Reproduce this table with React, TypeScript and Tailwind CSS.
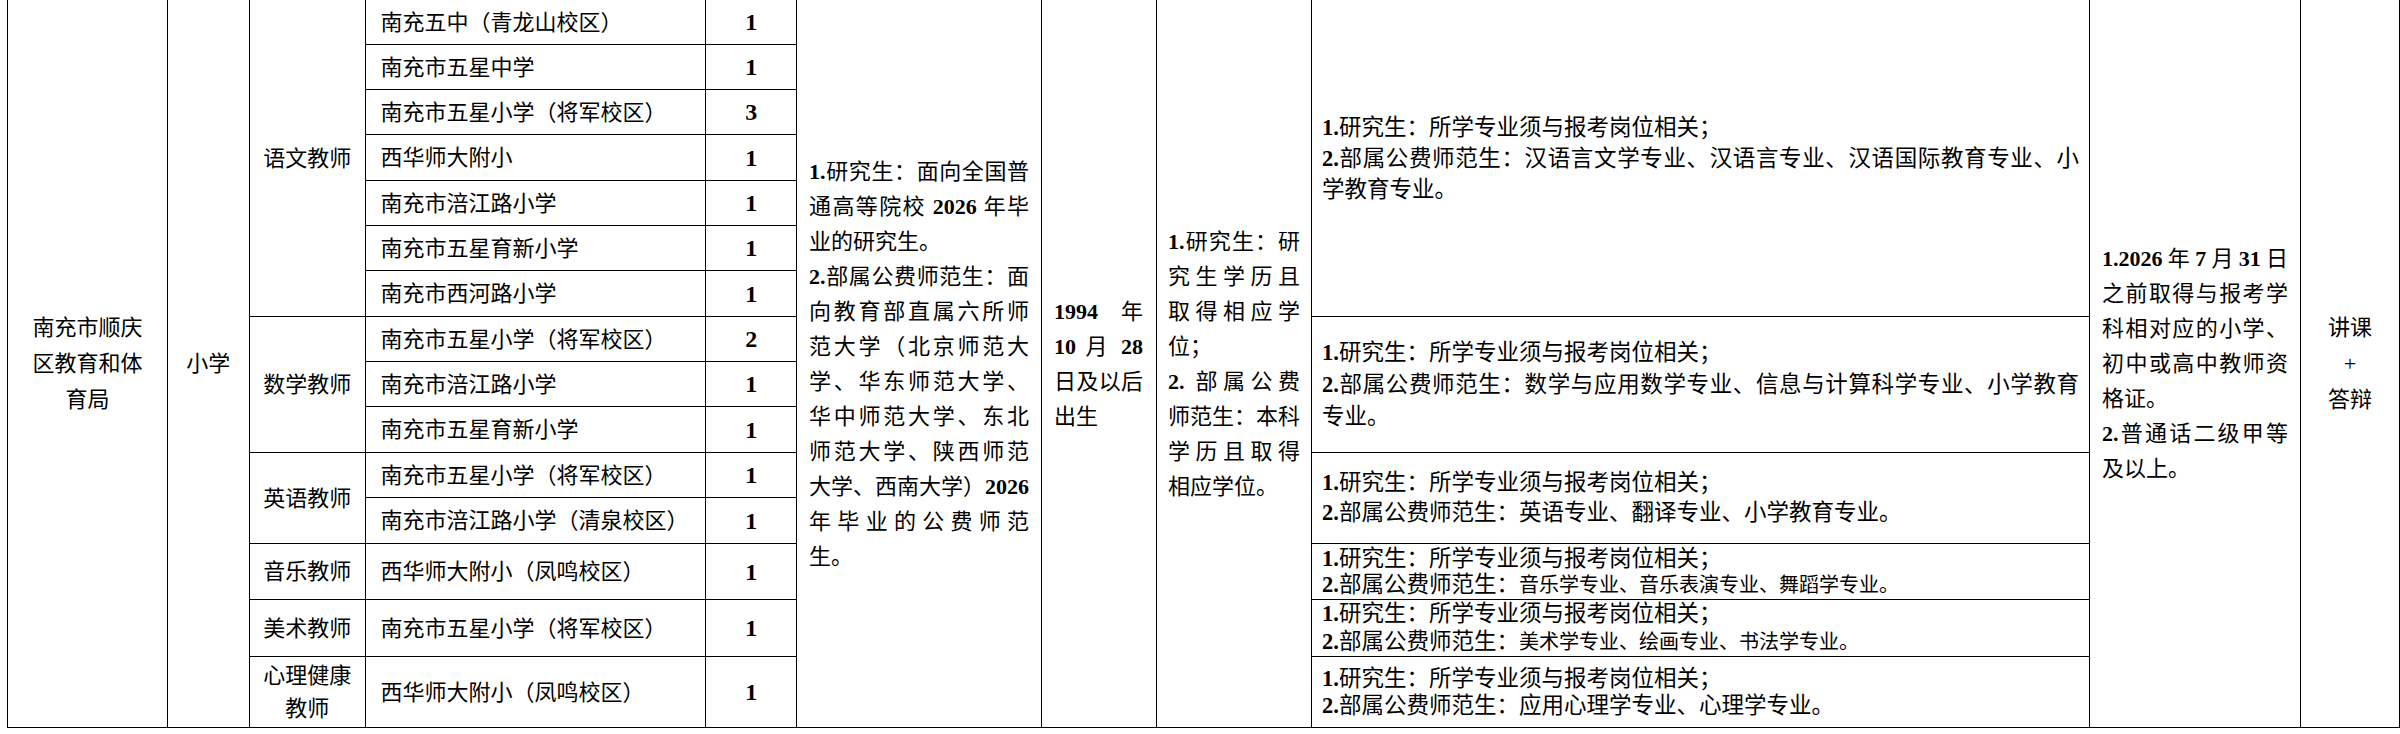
import React from "react";
import clsx from "clsx";

type School = { name: string; count: number; h: string };
type Group = { subject: React.ReactNode; schools: School[]; spec: React.ReactNode };

const cell = "border border-black p-0 align-middle";

// one printed line; justified lines are stretched to the cell width
function L({ j, className, children }: { j?: boolean; className?: string; children: React.ReactNode }) {
  return (
    <div className={clsx("whitespace-nowrap", j ? "text-justify [text-align-last:justify]" : "text-left", className)}>
      {children}
    </div>
  );
}

const B = ({ children }: { children: React.ReactNode }) => <b className="font-bold">{children}</b>;

const first = (
  <L>
    <B>1.</B>研究生：所学专业须与报考岗位相关；
  </L>
);

const groups: Group[] = [
  {
    subject: "语文教师",
    schools: [
      { name: "南充五中（青龙山校区）", count: 1, h: "h-[45px]" },
      { name: "南充市五星中学", count: 1, h: "h-[45px]" },
      { name: "南充市五星小学（将军校区）", count: 3, h: "h-[45px]" },
      { name: "西华师大附小", count: 1, h: "h-[46px]" },
      { name: "南充市涪江路小学", count: 1, h: "h-[45px]" },
      { name: "南充市五星育新小学", count: 1, h: "h-[45px]" },
      { name: "南充市西河路小学", count: 1, h: "h-[46px]" },
    ],
    spec: (
      <div className="leading-[31px]">
        {first}
        <L j>
          <B>2.</B>部属公费师范生：汉语言文学专业、汉语言专业、汉语国际教育专业、小
        </L>
        <L>学教育专业。</L>
      </div>
    ),
  },
  {
    subject: "数学教师",
    schools: [
      { name: "南充市五星小学（将军校区）", count: 2, h: "h-[45px]" },
      { name: "南充市涪江路小学", count: 1, h: "h-[45px]" },
      { name: "南充市五星育新小学", count: 1, h: "h-[46px]" },
    ],
    spec: (
      <div className="leading-[32px]">
        {first}
        <L j>
          <B>2.</B>部属公费师范生：数学与应用数学专业、信息与计算科学专业、小学教育
        </L>
        <L>专业。</L>
      </div>
    ),
  },
  {
    subject: "英语教师",
    schools: [
      { name: "南充市五星小学（将军校区）", count: 1, h: "h-[45px]" },
      { name: "南充市涪江路小学（清泉校区）", count: 1, h: "h-[46px]" },
    ],
    spec: (
      <div className="leading-[30px]">
        {first}
        <L>
          <B>2.</B>部属公费师范生：英语专业、翻译专业、小学教育专业。
        </L>
      </div>
    ),
  },
  {
    subject: "音乐教师",
    schools: [{ name: "西华师大附小（凤鸣校区）", count: 1, h: "h-[56px]" }],
    spec: (
      <div className="leading-[26px]">
        {first}
        <L>
          <B>2.</B>部属公费师范生：<span className="text-[20px]">音乐学专业、音乐表演专业、舞蹈学专业。</span>
        </L>
      </div>
    ),
  },
  {
    subject: "美术教师",
    schools: [{ name: "南充市五星小学（将军校区）", count: 1, h: "h-[55px]" }],
    spec: (
      <div className="leading-[28px]">
        {first}
        <L>
          <B>2.</B>部属公费师范生：<span className="text-[20px]">美术学专业、绘画专业、书法学专业。</span>
        </L>
      </div>
    ),
  },
  {
    subject: (
      <div className="leading-[33px]">
        心理健康
        <br />
        教师
      </div>
    ),
    schools: [{ name: "西华师大附小（凤鸣校区）", count: 1, h: "h-[71px]" }],
    spec: (
      <div className="leading-[27px]">
        {first}
        <L>
          <B>2.</B>部属公费师范生：应用心理学专业、心理学专业。
        </L>
      </div>
    ),
  },
];

const total = groups.reduce((n, g) => n + g.schools.length, 0);

export default function App() {
  let rowIndex = 0;

  return (
    <div className="h-[734px] w-[2400px] overflow-hidden bg-white text-[22px] text-black font-['Liberation_Serif','Noto_Sans_CJK_SC',serif]">
      <table className="ml-[7px] -mt-px table-fixed border-collapse">
        <colgroup>
          <col className="w-[160px]" />
          <col className="w-[82px]" />
          <col className="w-[116px]" />
          <col className="w-[341px]" />
          <col className="w-[91px]" />
          <col className="w-[243px]" />
          <col className="w-[115px]" />
          <col className="w-[155px]" />
          <col className="w-[778px]" />
          <col className="w-[211px]" />
          <col className="w-[99px]" />
        </colgroup>
        <tbody>
          {groups.map((g) =>
            g.schools.map((s, i) => {
              const top = rowIndex++ === 0;
              return (
                <tr key={`${s.name}-${rowIndex}`} className={s.h}>
                  {top && (
                    <>
                      <td rowSpan={total} className={clsx(cell, "text-center leading-[36px]")}>
                        南充市顺庆
                        <br />
                        区教育和体
                        <br />
                        育局
                      </td>
                      <td rowSpan={total} className={clsx(cell, "text-center")}>
                        小学
                      </td>
                    </>
                  )}
                  {i === 0 && (
                    <td rowSpan={g.schools.length} className={clsx(cell, "text-center")}>
                      {g.subject}
                    </td>
                  )}
                  <td className={clsx(cell, "pl-[15px]")}>{s.name}</td>
                  <td className={clsx(cell, "text-center text-[24px] font-bold")}>{s.count}</td>
                  {top && (
                    <>
                      <td rowSpan={total} className={clsx(cell, "px-[12px] leading-[35px]")}>
                        <L j>
                          <B>1.</B>研究生：面向全国普
                        </L>
                        <L j>
                          通高等院校 <B>2026</B> 年毕
                        </L>
                        <L>业的研究生。</L>
                        <L j>
                          <B>2.</B>部属公费师范生：面
                        </L>
                        <L j>向教育部直属六所师</L>
                        <L j>范大学（北京师范大</L>
                        <L j>学、华东师范大学、</L>
                        <L j>华中师范大学、东北</L>
                        <L j>师范大学、陕西师范</L>
                        <L j>
                          大学、西南大学）<B>2026</B>
                        </L>
                        <L j>年毕业的公费师范</L>
                        <L>生。</L>
                      </td>
                      <td rowSpan={total} className={clsx(cell, "pl-[12px] pr-[13px] leading-[35px]")}>
                        <L j>
                          <B>1994</B> 年
                        </L>
                        <L j>
                          <B>10</B> 月 <B>28</B>
                        </L>
                        <L j>日及以后</L>
                        <L>出生</L>
                      </td>
                      <td rowSpan={total} className={clsx(cell, "px-[11px] leading-[35px]")}>
                        <L j>
                          <B>1.</B>研究生：研
                        </L>
                        <L j>究生学历且</L>
                        <L j>取得相应学</L>
                        <L>位；</L>
                        <L j>
                          <B>2.</B> 部属公费
                        </L>
                        <L j>师范生：本科</L>
                        <L j>学历且取得</L>
                        <L>相应学位。</L>
                      </td>
                    </>
                  )}
                  {i === 0 && (
                    <td rowSpan={g.schools.length} className={clsx(cell, "px-[10px] text-[22.5px]")}>
                      {g.spec}
                    </td>
                  )}
                  {top && (
                    <>
                      <td rowSpan={total} className={clsx(cell, "px-[12px] leading-[35px]")}>
                        <L j>
                          <B>1.2026</B>年<B>7</B>月<B>31</B>日
                        </L>
                        <L j>之前取得与报考学</L>
                        <L j>科相对应的小学、</L>
                        <L j>初中或高中教师资</L>
                        <L>格证。</L>
                        <L j>
                          <B>2.</B>普通话二级甲等
                        </L>
                        <L>及以上。</L>
                      </td>
                      <td rowSpan={total} className={clsx(cell, "text-center leading-[36px]")}>
                        讲课
                        <br />+<br />
                        答辩
                      </td>
                    </>
                  )}
                </tr>
              );
            })
          )}
        </tbody>
      </table>
    </div>
  );
}
